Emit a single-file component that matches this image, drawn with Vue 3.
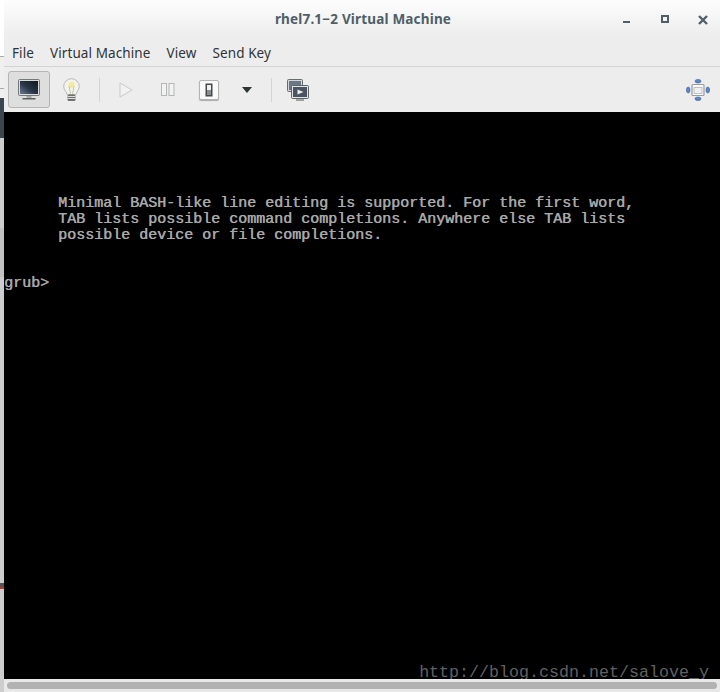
<script setup>
const lines = [
  'Minimal BASH-like line editing is supported. For the first word,',
  'TAB lists possible command completions. Anywhere else TAB lists',
  'possible device or file completions.',
]
const menus = ['File', 'Virtual Machine', 'View', 'Send Key']
</script>

<template>
  <div class="desktop">
    <div class="strip"></div>
    <div class="window">
      <header class="titlebar">
        <span class="title">rhel7.1−2 Virtual Machine</span>
        <div class="controls">
          <span class="min"></span>
          <span class="max"></span>
          <svg class="close" width="10" height="10" viewBox="0 0 10 10"><path d="M1 1l8 8M9 1l-8 8" stroke="#4f5f68" stroke-width="2.4" fill="none"/></svg>
        </div>
      </header>
      <nav class="menubar">
        <span v-for="m in menus" :key="m" class="menu">{{ m }}</span>
      </nav>
      <div class="toolbar">
        <button class="tool active">
          <svg width="24" height="22" viewBox="0 0 24 22">
            <defs><linearGradient id="scr" x1="1" y1="0" x2="0" y2="1"><stop offset="0" stop-color="#10161f"/><stop offset=".55" stop-color="#2a3547"/><stop offset="1" stop-color="#6d7c92"/></linearGradient></defs>
            <rect x="1.500" y=".5" width="21" height="16" rx="1" fill="#d9dbdb" stroke="#74797b"/>
            <rect x="3" y="2" width="18" height="13" fill="url(#scr)"/>
            <rect x="9.500" y="17" width="5" height="2" fill="#a5a8a8"/>
            <rect x="5.500" y="19" width="13" height="1.500" fill="#5b5f61"/>
          </svg>
        </button>
        <button class="tool bulb">
          <svg width="17" height="24" viewBox="0 0 17 24">
            <path d="M8.500 .7a7.800 7.800 0 0 0-7.800 7.800c0 3.200 2.600 4.500 3.300 8h9c.7-3.500 3.300-4.800 3.300-8A7.800 7.800 0 0 0 8.500 .7z" fill="#f3f3ee" stroke="#b6b9b5"/>
            <circle cx="8.500" cy="7" r="3" fill="#f4ea96"/>
            <path d="M6 8l1.500 8M11 8l-1.500 8" stroke="#c8c6a4" fill="none"/>
            <rect x="4.500" y="16.500" width="8" height="6.500" rx="1.500" fill="#6f7172"/>
            <path d="M4.500 18.500h8M4.500 20.500h8" stroke="#dadada"/>
          </svg>
        </button>
        <span class="sep first"></span>
        <button class="tool play">
          <svg width="14" height="16" viewBox="0 0 14 16"><path d="M1 1l12 7-12 7z" fill="#f2f2f2" stroke="#c8c9c8"/></svg>
        </button>
        <button class="tool pause">
          <svg width="14" height="14" viewBox="0 0 14 14"><rect x=".5" y=".5" width="5" height="12" fill="#f2f2f2" stroke="#b4b6b6"/><rect x="8" y=".5" width="5" height="12" fill="#f2f2f2" stroke="#b4b6b6"/></svg>
        </button>
        <button class="tool power">
          <span class="powerbox">
            <svg width="8" height="14" viewBox="0 0 8 14"><rect x=".5" y=".5" width="7" height="13" fill="#45494b"/><rect x="2" y="2" width="4" height="5" fill="#f0f0f0"/><rect x="2" y="7" width="4" height="5" fill="#8b8e8f"/></svg>
          </span>
        </button>
        <button class="tool caret">
          <svg width="10" height="6" viewBox="0 0 10 6"><path d="M0 0h10L5 6z" fill="#2e3436"/></svg>
        </button>
        <span class="sep second"></span>
        <button class="tool snap">
          <svg width="22" height="22" viewBox="0 0 22 22">
            <rect x=".5" y=".5" width="15" height="12" rx="1" fill="#d5d7d7" stroke="#666b6e"/>
            <rect x="2" y="2" width="12" height="9" fill="#6b7686"/>
            <rect x="4.500" y="6.500" width="17" height="13" rx="1" fill="#e1e3e3" stroke="#5f6467"/>
            <rect x="6" y="8" width="14" height="10" fill="#4a5463"/>
            <path d="M10.500 10.500l6 2.500-6 2.500z" fill="#eceeee"/>
            <rect x="9" y="20.300" width="8" height="1.500" fill="#85898a"/>
          </svg>
        </button>
        <button class="tool resize">
          <svg width="24" height="22" viewBox="0 0 24 22">
            <ellipse cx="12" cy="2.200" rx="3" ry="1.800" fill="#5f86c2" stroke="#3f659f" stroke-width=".6"/>
            <ellipse cx="12" cy="19.800" rx="3" ry="1.800" fill="#5f86c2" stroke="#3f659f" stroke-width=".6"/>
            <ellipse cx="2.200" cy="11" rx="1.800" ry="3" fill="#5f86c2" stroke="#3f659f" stroke-width=".6"/>
            <ellipse cx="21.800" cy="11" rx="1.800" ry="3" fill="#5f86c2" stroke="#3f659f" stroke-width=".6"/>
            <rect x="6" y="5.500" width="12" height="11" rx="1" fill="#fafafa" stroke="#9b9b9b" stroke-width="1.200"/>
            <rect x="8" y="8.500" width="8" height="6" fill="#f0f0f0" stroke="#b3b3b3" stroke-width=".8"/>
          </svg>
        </button>
      </div>
      <main class="screen">
        <pre class="console">{{ lines.join('\n') }}</pre>
        <div class="prompt">grub&gt;</div>
        <div class="watermark">http://blog.csdn.net/salove_y</div>
      </main>
      <div class="hscroll"><div class="thumb"></div></div>
    </div>
  </div>
</template>

<style scoped>
.desktop {
  width: 720px;
  height: 692px;
  display: flex;
  overflow: hidden;
  background: #fff;
}
.strip {
  width: 4px;
  flex: none;
  background: linear-gradient(#fff 0 56px, #a9a9a9 56px 57px, #efefef 57px 88px, #a9a9a9 88px 89px, #efefef 89px 98px, #3a4550 98px 138px, #cdcdcd 138px 228px, #c2c2c2 228px 277px, #cdcdcd 277px 583px, #555 583px 587px, #c8322c 587px 589px, #cdcdcd 589px);
}
.window {
  flex: 1;
  min-width: 0;
  display: flex;
  flex-direction: column;
  border-top-left-radius: 6px;
  overflow: hidden;
  background: #ededed;
}
.titlebar {
  height: 36px;
  flex: none;
  position: relative;
  display: flex;
  align-items: center;
  justify-content: center;
  padding: 2px 0 0;
  box-sizing: border-box;
  background: linear-gradient(#fdfdfd, #ededed);
}
.title {
  font: bold 13.500px "Noto Sans", sans-serif;
  letter-spacing: .18px;
  color: #4f5f68;
  margin-left: 2px;
}
.controls {
  position: absolute;
  right: 12px;
  top: 15px;
  display: flex;
  align-items: flex-start;
}
.min {
  width: 7px;
  height: 2px;
  margin: 6px 31px 0 0;
  background: #4f5f68;
}
.max {
  width: 4px;
  height: 4px;
  border: 2px solid #4f5f68;
  margin-right: 29px;
}
.close { display: block; }
.menubar {
  height: 31px;
  flex: none;
  display: flex;
  align-items: center;
  gap: 16px;
  padding: 4px 0 0 8px;
  box-sizing: border-box;
  border-bottom: 1px solid #d3d3d3;
  font: 13.500px "Noto Sans", sans-serif;
  letter-spacing: .1px;
  color: #2e3436;
}
.toolbar {
  height: 45px;
  flex: none;
  display: flex;
  align-items: center;
  padding-left: 4px;
  box-sizing: border-box;
}
.tool {
  padding: 0;
  border: 0;
  background: none;
  display: flex;
  align-items: center;
  justify-content: center;
  flex: none;
}
.active {
  width: 42px;
  height: 37px;
  border: 1px solid #b5b5b5;
  border-radius: 3px;
  background: #dedede;
}
.bulb { width: 17px; margin-left: 13px; }
.sep {
  width: 1px;
  height: 24px;
  background: #d5d5d5;
  flex: none;
}
.first { margin-left: 19px; }
.play { width: 14px; margin-left: 19px; }
.pause { width: 14px; margin-left: 28px; }
.power { margin-left: 24px; }
.powerbox {
  width: 18px;
  height: 18px;
  display: flex;
  align-items: center;
  justify-content: center;
  background: #fafafa;
  border: 1px solid #b3b3b3;
  border-radius: 2px;
  box-shadow: 0 1px 1px #aaa;
}
.caret { width: 10px; margin-left: 23px; }
.second { margin-left: 19px; }
.snap { margin-left: 15px; }
.resize { margin-left: auto; margin-right: 10px; }
.screen {
  flex: 1;
  min-height: 0;
  background: #000;
  position: relative;
  color: #a8a8a8;
  font: 15px/16px "Liberation Mono", monospace;
  text-shadow: .4px 0 0 #a8a8a8;
  padding-top: 84px;
  box-sizing: border-box;
}
.console {
  margin: 0 0 0 54px;
  font: inherit;
  white-space: pre;
}
.prompt {
  margin-top: 32px;
}
.watermark {
  position: absolute;
  right: 11px;
  bottom: 0;
  color: #606060;
  text-shadow: none;
  font: 16.670px/12px "Liberation Mono", monospace;
}
.hscroll {
  height: 13px;
  flex: none;
  position: relative;
  padding: 3px;
  box-sizing: border-box;
  background: #e8e8e8;
}
.thumb {
  height: 7px;
  border-radius: 4px;
  background: #b2b2b2;
}
</style>
